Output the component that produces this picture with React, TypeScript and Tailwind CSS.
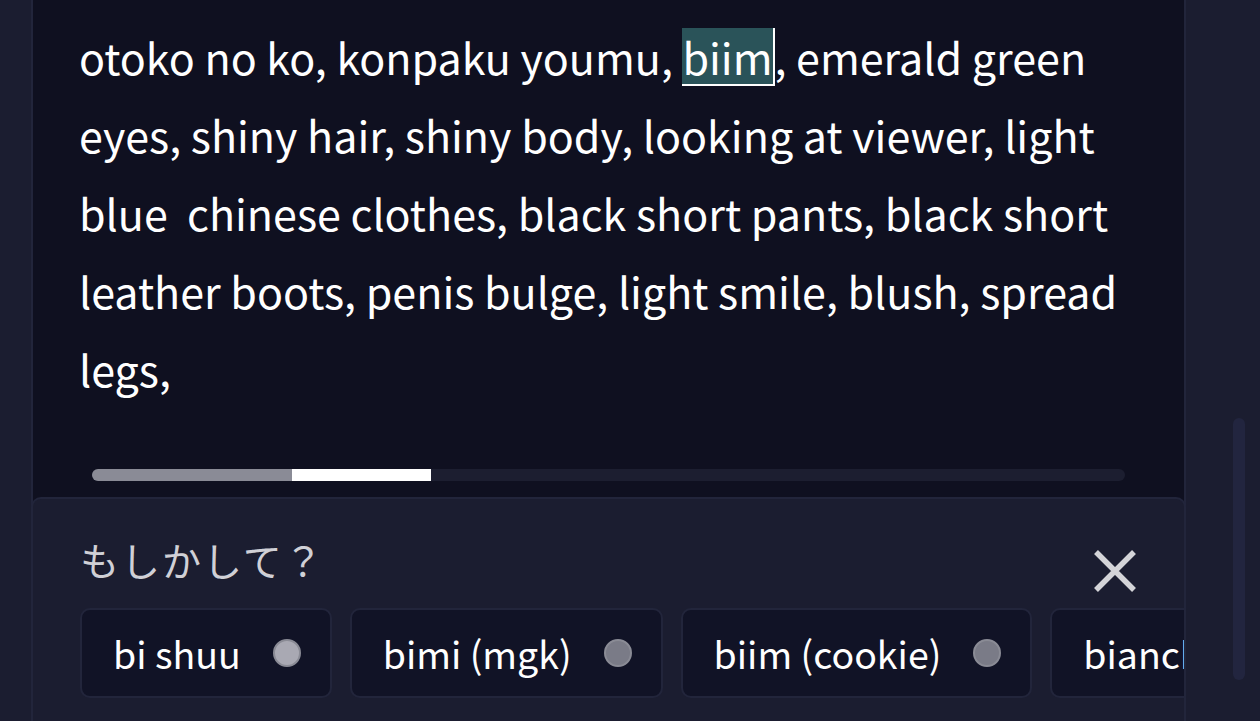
import React from "react";

const font = { fontFamily: '"Noto Sans CJK JP", "Noto Sans", sans-serif' };

function Chip({ label, dot }: { label: string; dot: string }) {
  return (
    <div className="flex h-[90px] shrink-0 items-center gap-[32px] rounded-[10px] border-2 border-[#22253b] bg-[#111326] pl-[31px] pr-[29px]">
      <span className="whitespace-nowrap text-[37.5px] leading-none text-white">{label}</span>
      <span className={`h-[28px] w-[28px] rounded-full border-2 border-[#8a8b95] ${dot}`} />
    </div>
  );
}

export default function App() {
  return (
    <div style={font} className="flex h-[721px] w-[1260px] overflow-hidden bg-[#1b1d30]">
      <div className="w-[31px] shrink-0" />
      <div className="flex w-[1155px] shrink-0 flex-col border-x-2 border-[#22253b] bg-[#0f1020]">
        <div className="h-[469px] shrink-0 pl-[46px] pr-[20px] pt-[17px]">
          <p className="whitespace-pre-wrap text-[43px] leading-[78px] text-white">
            {"otoko no ko, konpaku youmu, "}
            <span className="inline-block border-b-2 border-r-2 border-white bg-[#2a5359] leading-[56px]">biim</span>
            {", emerald green eyes, shiny hair, shiny body, looking at viewer, light blue  chinese clothes, black short pants, black short leather boots, penis bulge, light smile, blush, spread legs,"}
          </p>
        </div>
        <div className="mx-[59px] flex h-[12px] shrink-0 overflow-hidden rounded-full bg-[#1c1e30]">
          <div className="w-[200px] bg-[#8a8b96]" />
          <div className="w-[139px] bg-white" />
        </div>
        <div className="h-[16px] shrink-0" />
        <div className="-mx-[2px] flex flex-1 flex-col rounded-t-[10px] border-x-2 border-t-2 border-[#22253b] bg-[#1b1d30] pl-[47px]">
          <div className="flex h-[109px] items-center justify-between pr-[46px] pt-[12px]">
            <span className="text-[39px] tracking-[2px] text-[#d0d0d6]">もしかして？</span>
            <svg width="46" height="46" viewBox="0 0 46 46" className="mt-[22px]">
              <path d="M4 4 L42 42 M42 4 L4 42" stroke="#d4d4d8" strokeWidth="5.5" />
            </svg>
          </div>
          <div className="flex gap-[18px] overflow-hidden">
            <Chip label="bi shuu" dot="bg-[#a9a9b3]" />
            <Chip label="bimi (mgk)" dot="bg-[#7a7b87]" />
            <Chip label="biim (cookie)" dot="bg-[#7a7b87]" />
            <Chip label="bianchi" dot="bg-[#7a7b87]" />
          </div>
        </div>
      </div>
      <div className="flex flex-1 justify-end pr-[15px] pt-[418px]">
        <div className="h-[262px] w-[12px] rounded-full bg-[#22253f]" />
      </div>
    </div>
  );
}
